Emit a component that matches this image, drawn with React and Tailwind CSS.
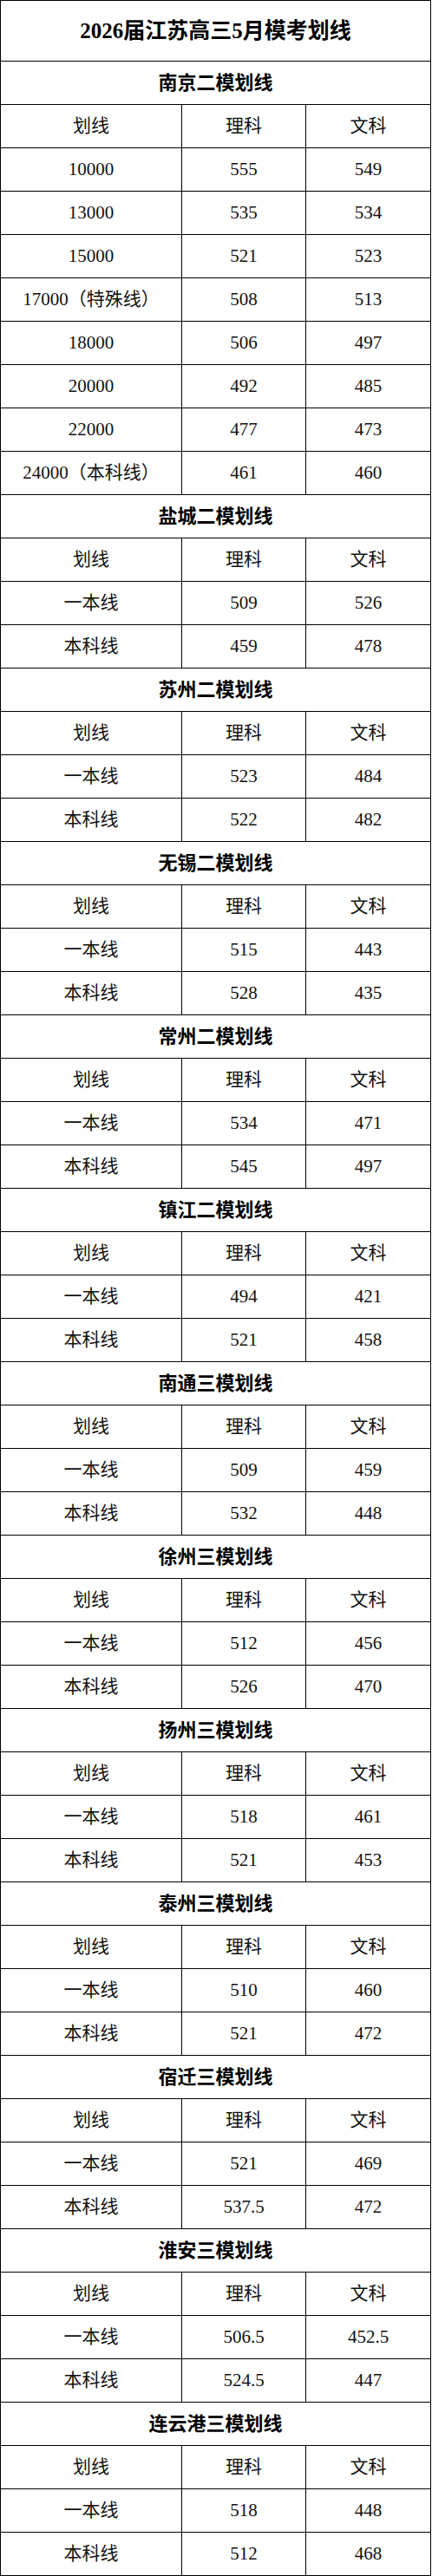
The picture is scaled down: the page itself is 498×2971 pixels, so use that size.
const nanjing = [
  ["10000", "555", "549"],
  ["13000", "535", "534"],
  ["15000", "521", "523"],
  ["17000（特殊线）", "508", "513"],
  ["18000", "506", "497"],
  ["20000", "492", "485"],
  ["22000", "477", "473"],
  ["24000（本科线）", "461", "460"],
];

// Each city: [name, 一本线 理/文, 本科线 理/文]
const cities = [
  ["盐城二模划线", ["509", "526"], ["459", "478"]],
  ["苏州二模划线", ["523", "484"], ["522", "482"]],
  ["无锡二模划线", ["515", "443"], ["528", "435"]],
  ["常州二模划线", ["534", "471"], ["545", "497"]],
  ["镇江二模划线", ["494", "421"], ["521", "458"]],
  ["南通三模划线", ["509", "459"], ["532", "448"]],
  ["徐州三模划线", ["512", "456"], ["526", "470"]],
  ["扬州三模划线", ["518", "461"], ["521", "453"]],
  ["泰州三模划线", ["510", "460"], ["521", "472"]],
  ["宿迁三模划线", ["521", "469"], ["537.5", "472"]],
  ["淮安三模划线", ["506.5", "452.5"], ["524.5", "447"]],
  ["连云港三模划线", ["518", "448"], ["512", "468"]],
];

const font = { fontFamily: '"Liberation Serif", "Noto Sans CJK SC", serif' };

const Cell = ({ children }) => (
  <td className="h-[50px] border border-black p-0 text-center align-middle text-[21px] text-[#111]">
    {children}
  </td>
);

const Section = ({ title }) => (
  <tr>
    <td
      colSpan={3}
      className="h-[50px] border border-black p-0 text-center align-middle text-[22px] font-bold text-black"
    >
      {title}
    </td>
  </tr>
);

const HeadRow = () => (
  <tr>
    <Cell>划线</Cell>
    <Cell>理科</Cell>
    <Cell>文科</Cell>
  </tr>
);

export default function App() {
  return (
    <div className="bg-white" style={font}>
      <table className="w-[496px] table-fixed border-collapse border border-black">
        <colgroup>
          <col className="w-[209px]" />
          <col className="w-[143px]" />
          <col className="w-[144px]" />
        </colgroup>
        <tbody>
          <tr>
            <td
              colSpan={3}
              className="h-[70px] border border-black p-0 text-center align-middle text-[25px] font-bold text-black"
            >
              2026届江苏高三5月模考划线
            </td>
          </tr>

          {/* 南京 */}
          <Section title="南京二模划线" />
          <HeadRow />
          {nanjing.map((r) => (
            <tr key={r[0]}>
              <Cell>{r[0]}</Cell>
              <Cell>{r[1]}</Cell>
              <Cell>{r[2]}</Cell>
            </tr>
          ))}

          {/* 其他城市 */}
          {cities.map(([name, yi, ben]) => [
            <Section key={name} title={name} />,
            <HeadRow key={name + "h"} />,
            <tr key={name + "1"}>
              <Cell>一本线</Cell>
              <Cell>{yi[0]}</Cell>
              <Cell>{yi[1]}</Cell>
            </tr>,
            <tr key={name + "2"}>
              <Cell>本科线</Cell>
              <Cell>{ben[0]}</Cell>
              <Cell>{ben[1]}</Cell>
            </tr>,
          ])}
        </tbody>
      </table>
    </div>
  );
}
